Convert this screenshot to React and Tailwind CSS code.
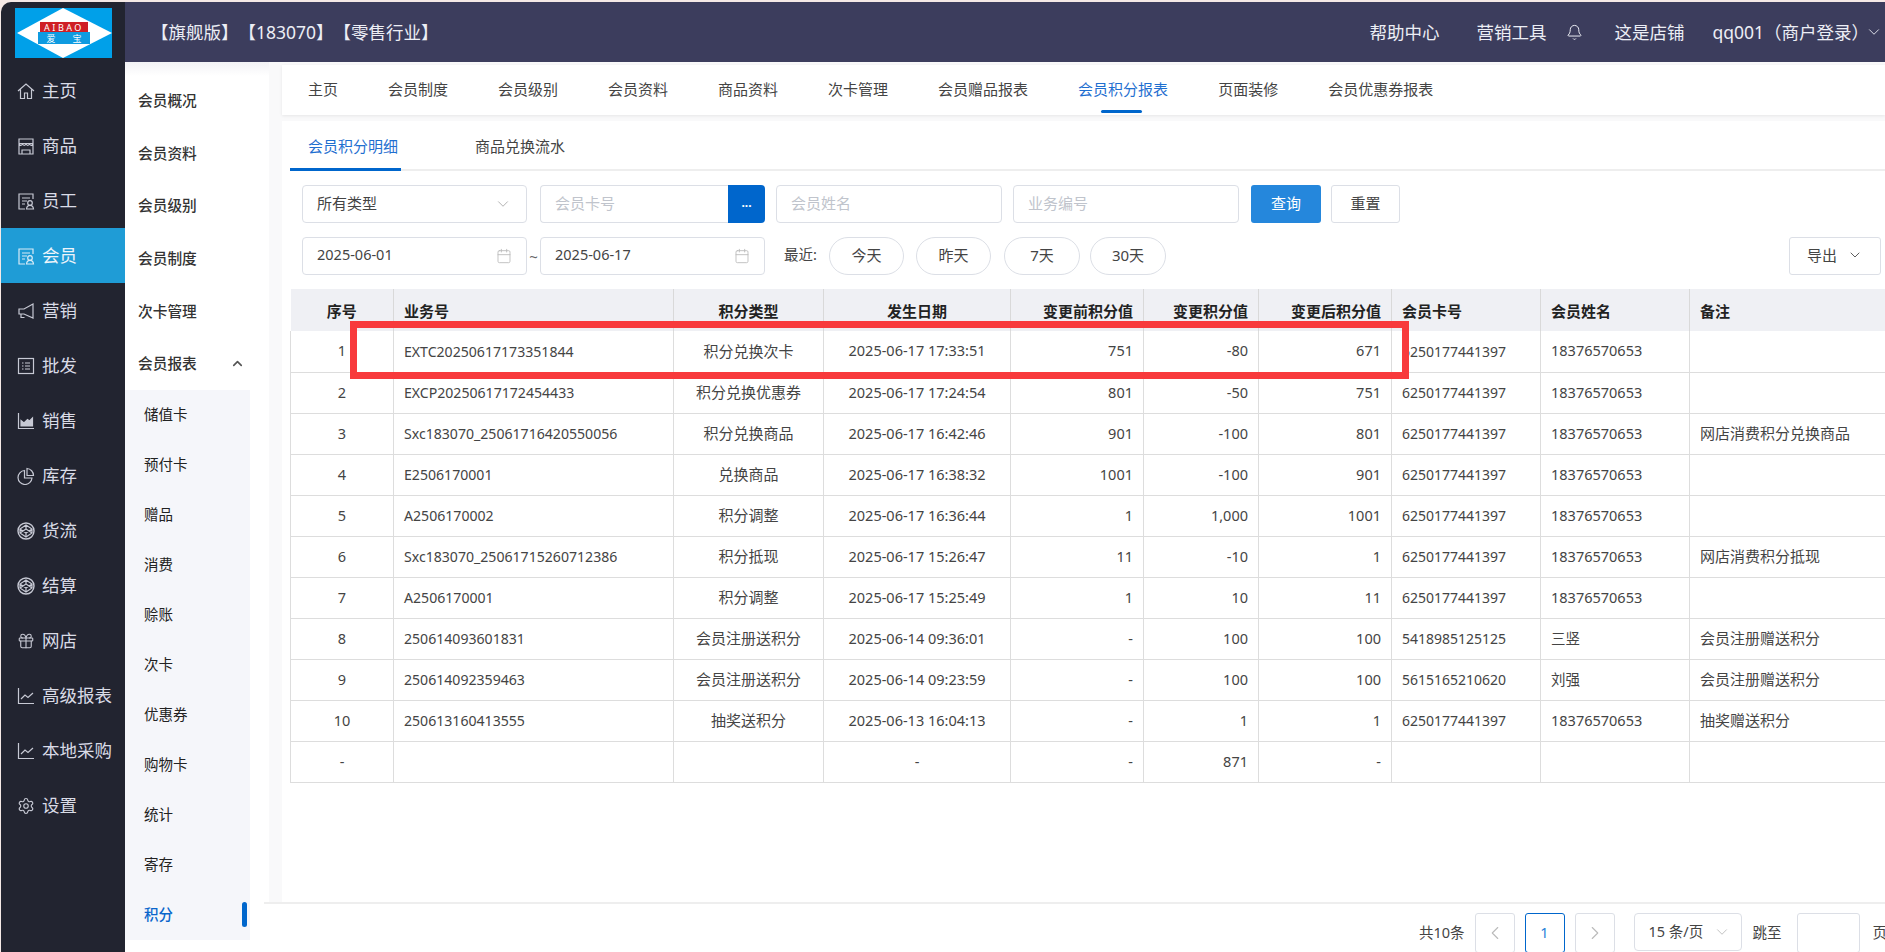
import React from "react";
import { ChevronDown, ChevronUp, ChevronLeft, ChevronRight, Bell, Calendar, Settings, Gift } from "lucide-react";

const S = ({ children, className = "w-[18px] h-[18px]" }) => (
  <svg viewBox="0 0 18 18" fill="none" stroke="currentColor" strokeWidth="1.2" className={className}>{children}</svg>
);
const Doc = () => <S><path d="M16 7V2H2v15h6" /><path d="M5 6h8M5 9h5M5 12h3" /><circle cx="13" cy="11" r="2.3" /><path d="M9.500 17c.3-2.400 1.600-3.600 3.500-3.600s3.200 1.200 3.500 3.600z" /></S>;
const Cube = () => <S strokeWidth="1.4"><circle cx="9" cy="9" r="8" strokeWidth="1.4" /><path d="M9 3l6 4v4l-6 4-6-4V7zM9 3v4M3 7l6 4 6-4M3 11l6-4 6 4M9 11v4" /></S>;
const icons = {
  home: <S><path d="M1 9l8-7 8 7M3.500 7.500V16.500h4V11h3v5.500h4V7.500" /></S>,
  store: <S><path d="M2 2h14v4.500H2zM2 6.500V17h14V6.500M2 6.500c1 2.500 3 2.500 3.500 0 .5 2.500 3 2.500 3.500 0 .5 2.500 3 2.500 3.500 0 .5 2.500 2.500 2.500 3.500 0M5 17v-4h8v4" /></S>,
  doc: <Doc />,
  mega: <S><path d="M16 2v14L7 12H2V7h5zM4 12v3.500h3.500" /></S>,
  list: <S><rect x="1.500" y="1.500" width="15" height="15" /><path d="M5 6h1.500M8 6h5M5 9h1.500M8 9h5M5 12h1.500M8 12h5" /></S>,
  area: <S><path d="M1.500 1v15.500H17" /><path d="M4 14V8.500l3 2.500 3.500-3.500 2 1.500L15.500 6v8z" fill="currentColor" /></S>,
  pie: <S><path d="M7.500 3.500a7 7 0 1 0 7.500 7.500H7.500z" /><path d="M10 1.500a7 7 0 0 1 6.500 7H10z" /></S>,
  cube: <Cube />,
  gift: <Gift className="w-[18px] h-[18px]" strokeWidth={1.5} />,
  line: <S><path d="M1.500 1v15.500H17" /><path d="M4 12l4-4 3 2.500L16 6" /></S>,
  gear: <Settings className="w-[18px] h-[18px]" strokeWidth={1.5} />,
};

const menu = [
  ["home", "主页"], ["store", "商品"], ["doc", "员工"], ["doc", "会员", true], ["mega", "营销"], ["list", "批发"], ["area", "销售"],
  ["pie", "库存"], ["cube", "货流"], ["cube", "结算"], ["gift", "网店"], ["line", "高级报表"], ["line", "本地采购"], ["gear", "设置"],
];
const sections = ["会员概况", "会员资料", "会员级别", "会员制度", "次卡管理"];
const subs = ["储值卡", "预付卡", "赠品", "消费", "赊账", "次卡", "优惠券", "购物卡", "统计", "寄存"];
const tabs = [["主页"], ["会员制度"], ["会员级别"], ["会员资料"], ["商品资料"], ["次卡管理"], ["会员赠品报表"], ["会员积分报表", true], ["页面装修"], ["会员优惠券报表"]];
const d = "2025-06-17";
const c1 = "6250177441397", n1 = "18376570653";
const rows = [
  ["1", "EXTC20250617173351844", "积分兑换次卡", d + " 17:33:51", "751", "-80", "671", c1, n1, ""],
  ["2", "EXCP20250617172454433", "积分兑换优惠券", d + " 17:24:54", "801", "-50", "751", c1, n1, ""],
  ["3", "Sxc183070_25061716420550056", "积分兑换商品", d + " 16:42:46", "901", "-100", "801", c1, n1, "网店消费积分兑换商品"],
  ["4", "E2506170001", "兑换商品", d + " 16:38:32", "1001", "-100", "901", c1, n1, ""],
  ["5", "A2506170002", "积分调整", d + " 16:36:44", "1", "1,000", "1001", c1, n1, ""],
  ["6", "Sxc183070_25061715260712386", "积分抵现", d + " 15:26:47", "11", "-10", "1", c1, n1, "网店消费积分抵现"],
  ["7", "A2506170001", "积分调整", d + " 15:25:49", "1", "10", "11", c1, n1, ""],
  ["8", "250614093601831", "会员注册送积分", "2025-06-14 09:36:01", "-", "100", "100", "5418985125125", "三竖", "会员注册赠送积分"],
  ["9", "250614092359463", "会员注册送积分", "2025-06-14 09:23:59", "-", "100", "100", "5615165210620", "刘强", "会员注册赠送积分"],
  ["10", "250613160413555", "抽奖送积分", "2025-06-13 16:04:13", "-", "1", "1", c1, n1, "抽奖赠送积分"],
  ["-", "", "", "-", "-", "871", "-", "", "", ""],
];
const cols = [
  ["序号", "w-[103px]", "text-center", "text-[14.5px]"], ["业务号", "w-[280px]", "text-left", "text-[14.100px]"], ["积分类型", "w-[150px]", "text-center", "text-[15px]"], ["发生日期", "w-[187px]", "text-center", "text-[14.5px]"],
  ["变更前积分值", "w-[133px]", "text-right", "text-[14.5px]"], ["变更积分值", "w-[115px]", "text-right", "text-[14.5px]"], ["变更后积分值", "w-[133px]", "text-right", "text-[14.5px]"], ["会员卡号", "w-[149px]", "text-left", "text-[14px]"],
  ["会员姓名", "w-[149px]", "text-left", "text-[14.5px]"], ["备注", "w-[196px]", "text-left", "text-[15px]"],
];

const Field = ({ w, children, ph, right, small }) => (
  <div className={`${w} h-[38px] border border-[#dcdfe6] rounded-[4px] flex items-center justify-between pl-[14px] pr-[14px] bg-white`}>
    <span className={`pb-[2px] ${ph ? "text-[#c0c4cc]" : "text-[#444]"} ${small ? "text-[14.5px]" : ""}`}>{children}</span>
    {right}
  </div>
);
const Cal = () => <Calendar className="w-[16px] h-[16px] text-[#bbb]" strokeWidth={1.3} />;
const Pill = ({ w, children }) => (
  <div className={`${w} h-[38px] border border-[#dcdfe6] rounded-full flex items-center justify-center pb-[2px] text-[#444]`}>{children}</div>
);

export default function App() {
  return (
    <div className="w-[1885px] h-[952px] overflow-hidden bg-[#f5e9e6] pt-[2px] pl-[1px] flex font-['Noto_Sans','Noto_Sans_CJK_SC',sans-serif] text-[15px] text-[#333] [text-spacing-trim:space-all]">
      <aside className="w-[124px] shrink-0 bg-[#222430] rounded-tl-[10px] text-[#d9dbe6]">
        <div className="h-[60px] pl-[14px] pt-[6px]">
          <div className="relative w-[97px] h-[50px] bg-[#00a0e9]">
            <svg viewBox="0 0 97 50" className="absolute inset-0 w-full h-full">
              <polygon points="2,25 48,0 97,25 48,50" fill="#fff" />
              <rect x="25" y="14" width="48" height="10" fill="#cf1f25" />
              <rect x="23" y="24" width="52" height="12" fill="#0f9be0" />
            </svg>
            <div className="absolute left-[25px] top-[14px] w-[48px] h-[10px] flex items-center justify-center text-white text-[9px] tracking-[2.500px] leading-none">AIBAO</div>
            <div className="absolute left-[23px] top-[24px] w-[52px] h-[12px] flex items-center justify-center gap-[17px] text-white text-[9px] leading-none"><span>爱</span><span>宝</span></div>
          </div>
        </div>
        <nav className="pt-[1px]">
          {menu.map(([ic, t, on]) => (
            <div key={t} className={`h-[55px] flex items-center pl-[16px] gap-[7px] text-[17.5px] ${on ? "bg-[#1f9cd6] text-[#eef4fa]" : ""}`}>
              <span className="w-[18px] h-[18px] shrink-0 opacity-90">{icons[ic]}</span>
              <span className="whitespace-nowrap">{t}</span>
            </div>
          ))}
        </nav>
      </aside>

      <div className="flex-1 min-w-0 flex flex-col bg-white">
        <header className="h-[60px] shrink-0 bg-[#3c3d5d] text-[#eceef5] flex items-center text-[17.5px]">
          <div className="pl-[26px] flex-1 whitespace-nowrap">【旗舰版】【183070】【零售行业】</div>
          <div className="w-[70px] whitespace-nowrap">帮助中心</div>
          <div className="w-[70px] ml-[37px] whitespace-nowrap">营销工具</div>
          <Bell className="w-[17px] h-[17px] ml-[20px]" strokeWidth={1.4} />
          <div className="ml-[31px] whitespace-nowrap">这是店铺</div>
          <div className="ml-[28px] whitespace-nowrap">qq001（商户登录）</div>
          <ChevronDown className="w-[18px] h-[18px] ml-[-4px] mr-[2px]" strokeWidth={1.2} />
        </header>

        <div className="flex-1 flex min-h-0">
          <div className="w-[144px] shrink-0 bg-gradient-to-b from-[#f2f2f5] to-white to-[14px] pt-[12px]">
            {sections.map((s) => (
              <div key={s} className="h-[52.600px] flex items-center pl-[13px] font-medium text-[#333] text-[14.700px]">{s}</div>
            ))}
            <div className="h-[52.600px] flex items-center justify-between pl-[13px] pr-[24px] font-medium text-[14.700px]">
              会员报表
              <ChevronUp className="w-[15px] h-[15px] text-[#555]" strokeWidth={2.6} />
            </div>
            <div className="w-[125px] bg-[#f5f6fa] text-[#222] text-[14.5px]">
              {subs.map((s) => (
                <div key={s} className="h-[50px] flex items-center pl-[19px]">{s}</div>
              ))}
              <div className="h-[50px] flex items-center justify-between pl-[19px] pr-[3px] text-[#0a66cc] font-medium">
                积分
                <span className="w-[5px] h-[25px] rounded-[3px] bg-[#0066cc]" />
              </div>
            </div>
          </div>

          <main className="flex-1 min-w-0 flex flex-col bg-[#f9f9fa] pl-[13px] pt-[3px]">
            <nav className="h-[50px] shrink-0 bg-white shadow-[0_1px_3px_rgba(0,0,0,0.08)] flex items-center gap-[50px] pl-[26px]">
              {tabs.map(([t, on]) => (
                <div key={t} className={`relative h-full flex items-center pb-[1px] whitespace-nowrap ${on ? "text-[#1f6fd0]" : "text-[#444]"}`}>
                  {t}
                  {on && <span className="absolute bottom-[2px] left-[23px] w-[41px] h-[3px] bg-[#0066cc] rounded-full" />}
                </div>
              ))}
            </nav>

            <section className="mt-[6px] flex-1 min-h-0 bg-white pl-[8px] overflow-hidden">
              <div className="h-[50px] border-b-2 border-[#eeeeee] flex items-stretch">
                <div className="w-[111px] h-[50px] flex items-center pl-[18px] pt-[4px] whitespace-nowrap border-b-[3px] border-[#0066cc] text-[#1f6fd0]">会员积分明细</div>
                <div className="pl-[74px] h-[50px] flex items-center pt-[1px] whitespace-nowrap text-[#444]">商品兑换流水</div>
              </div>

              <div className="pl-[12px] pt-[14px] pb-[14px] pr-[4px] flex flex-col gap-[14px]">
                <div className="flex items-center">
                  <Field w="w-[225px]" right={<ChevronDown className="w-[18px] h-[18px] text-[#aaa]" strokeWidth={1.2} />}>所有类型</Field>
                  <div className="ml-[13px] flex">
                    <div className="w-[188px] h-[38px] border border-r-0 border-[#dcdfe6] rounded-l-[4px] flex items-center pl-[14px] pb-[2px] text-[#c0c4cc]">会员卡号</div>
                    <div className="w-[37px] h-[38px] bg-[#0066cc] rounded-r-[4px] flex items-center justify-center text-white text-[12px] font-bold leading-none pb-[3px]">...</div>
                  </div>
                  <div className="ml-[11px]"><Field w="w-[226px]" ph>会员姓名</Field></div>
                  <div className="ml-[11px]"><Field w="w-[226px]" ph>业务编号</Field></div>
                  <div className="ml-[12px] w-[70px] h-[38px] rounded-[3px] bg-[#2587dc] text-white flex items-center justify-center pb-[2px]">查询</div>
                  <div className="ml-[10px] w-[69px] h-[38px] rounded-[3px] border border-[#dcdfe6] text-[#444] flex items-center justify-center pb-[2px]">重置</div>
                </div>
                <div className="flex items-center">
                  <Field w="w-[225px]" small right={<Cal />}>2025-06-01</Field>
                  <span className="w-[13px] text-center text-[#666]">~</span>
                  <Field w="w-[225px]" small right={<Cal />}>2025-06-17</Field>
                  <span className="ml-[19px] w-[45px] pb-[2px] text-[#444] whitespace-nowrap text-[14.5px]">最近:</span>
                  <Pill w="w-[75px]">今天</Pill>
                  <div className="ml-[12px]"><Pill w="w-[75px]">昨天</Pill></div>
                  <div className="ml-[13px]"><Pill w="w-[76px]">7天</Pill></div>
                  <div className="ml-[10px]"><Pill w="w-[76px]">30天</Pill></div>
                  <div className="ml-auto w-[92px] h-[38px] border border-[#dcdfe6] rounded-[3px] flex items-center justify-center gap-[10px] pb-[2px] text-[#444]">
                    导出
                    <ChevronDown className="w-[16px] h-[16px]" strokeWidth={1.3} />
                  </div>
                </div>
              </div>

              <div className="relative">
                <table className="table-fixed border-collapse w-[1595px]">
                  <thead>
                    <tr className="h-[42px] bg-[#eff0f4]">
                      {cols.map(([t, w, a]) => (
                        <th key={t} className={`${w} ${a} px-[10px] pt-[2px] text-[15px] font-semibold text-[#222] border-l border-[#d9d9d9] first:border-l-0`}>{t}</th>
                      ))}
                    </tr>
                  </thead>
                  <tbody>
                    {rows.map((r, i) => (
                      <tr key={i} className="h-[41px] border-b border-[#dddddd]">
                        {r.map((v, j) => (
                          <td key={j} className={`${cols[j][2]} ${cols[j][3]} px-[10px] text-[#444] whitespace-nowrap border-l border-[#dddddd] overflow-hidden`}>{v}</td>
                        ))}
                      </tr>
                    ))}
                  </tbody>
                </table>
                <div className="absolute left-[60px] top-[32px] w-[1059px] h-[58px] border-[7px] border-[#f83a3c]" />
              </div>
            </section>

            <footer className="h-[50px] shrink-0 -ml-[18px] border-t-2 border-[#eeeeee] bg-white flex items-start justify-end pt-[9px] text-[#444] text-[14.5px]">
              <span className="h-[40px] flex items-center mr-[10px]">共10条</span>
              <div className="w-[40px] h-[40px] border border-[#dcdfe6] rounded-[3px] flex items-center justify-center text-[#bbb]"><ChevronLeft className="w-[22px] h-[22px]" strokeWidth={1.2} /></div>
              <div className="ml-[10px] w-[40px] h-[40px] border border-[#0066cc] rounded-[3px] flex items-center justify-center text-[#1f7fd8]">1</div>
              <div className="ml-[10px] w-[40px] h-[40px] border border-[#dcdfe6] rounded-[3px] flex items-center justify-center text-[#bbb]"><ChevronRight className="w-[22px] h-[22px]" strokeWidth={1.2} /></div>
              <div className="ml-[19px] w-[108px] h-[38px] border border-[#dcdfe6] rounded-[4px] flex items-center justify-between pl-[14px] pr-[10px]">15 条/页<ChevronDown className="w-[18px] h-[18px] text-[#bbb]" strokeWidth={1.2} /></div>
              <span className="ml-[11px] h-[40px] flex items-center">跳至</span>
              <div className="ml-[15px] w-[63px] h-[40px] border border-[#dcdfe6] rounded-[3px]" />
              <span className="ml-[13px] h-[40px] flex items-center whitespace-nowrap mr-[-2px]">页</span>
            </footer>
          </main>
        </div>
      </div>
    </div>
  );
}
